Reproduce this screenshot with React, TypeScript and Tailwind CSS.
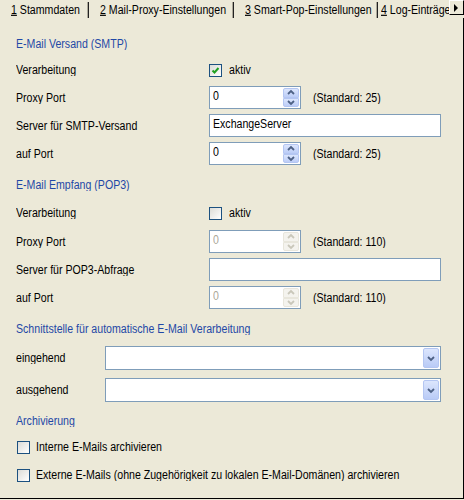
import React from "react";

const Txt = ({ children, className = "" }: { children: React.ReactNode; className?: string }) => (
  <span className={`inline-block scale-y-[1.18] whitespace-nowrap ${className}`}>{children}</span>
);

function Chevron({ dir, color }: { dir: "up" | "down"; color: string }) {
  const d = dir === "up" ? "M1 5 L4 2 L7 5" : "M1 2 L4 5 L7 2";
  return (
    <svg width="8" height="7" viewBox="0 0 8 7">
      <path d={d} fill="none" stroke={color} strokeWidth={1.8} />
    </svg>
  );
}

function Heading({ children, mt }: { children: React.ReactNode; mt: string }) {
  return (
    <div className={`h-[16px] flex items-center text-[#1f48a6] ${mt}`}>
      <Txt>{children}</Txt>
    </div>
  );
}

function Checkbox({ checked }: { checked?: boolean }) {
  return (
    <div className="w-[13px] h-[13px] border border-[#1c5180] bg-gradient-to-br from-[#dcdcd7] to-white flex items-center justify-center shrink-0">
      {checked && (
        <svg width="9" height="9" viewBox="0 0 9 9">
          <path d="M1.5 4.5 L3.5 6.5 L7.5 2" fill="none" stroke="#21a121" strokeWidth={2} />
        </svg>
      )}
    </div>
  );
}

function SpinBox({ value, disabled }: { value: string; disabled?: boolean }) {
  const arrow = disabled ? "#c9c7ba" : "#4d6185";
  const btn = disabled
    ? "bg-[#f4f3ee] border border-[#e8e6dc]"
    : "bg-gradient-to-b from-[#dce6fd] to-[#bccdf7] border border-[#b4c6f2]";
  return (
    <div className="w-[92px] h-[23px] border border-[#7f9db9] bg-white flex p-[1px]">
      <div className={`flex-1 pl-[2px] leading-[14px] ${disabled ? "text-[#aca899]" : "text-black"}`}>
        <Txt>{value}</Txt>
      </div>
      <div className="w-[16px] flex flex-col">
        <div className={`flex-1 flex items-center justify-center rounded-t-[2px] ${btn}`}>
          <Chevron dir="up" color={arrow} />
        </div>
        <div className={`flex-1 flex items-center justify-center rounded-b-[2px] ${btn}`}>
          <Chevron dir="down" color={arrow} />
        </div>
      </div>
    </div>
  );
}

function TextBox({ value }: { value?: string }) {
  return (
    <div className="w-[232px] h-[23px] border border-[#7f9db9] bg-white pl-[3px] leading-[16px]">
      <Txt>{value}</Txt>
    </div>
  );
}

function Combo() {
  return (
    <div className="w-[336px] h-[24px] border border-[#7f9db9] bg-white flex justify-end p-[1px]">
      <div className="w-[16px] rounded-[2px] bg-gradient-to-b from-[#dce6fd] to-[#b9cbf6] border border-[#b4c6f2] flex items-center justify-center">
        <Chevron dir="down" color="#4d6185" />
      </div>
    </div>
  );
}

function Row({ label, mt, h = "h-[23px]", children }: { label: string; mt: string; h?: string; children: React.ReactNode }) {
  return (
    <div className={`flex items-center ${h} ${mt}`}>
      <div className="w-[193px] shrink-0">
        <Txt>{label}</Txt>
      </div>
      {children}
    </div>
  );
}

function Tab({ num, label, w }: { num: string; label: string; w: string }) {
  return (
    <div className={`${w} shrink-0 h-full flex`}>
      <div className="flex-1 pl-[11px] pt-[2px] overflow-hidden">
        <Txt>
          <span className="underline underline-offset-1">{num}</span> {label}
        </Txt>
      </div>
      <div className="w-[1px] mt-[2px] bg-[#aca899]" />
      <div className="w-[1px] mt-[2px] bg-[#222]" />
    </div>
  );
}

export default function App() {
  return (
    <div className="w-[464px] h-[500px] bg-[#ece9d8] flex flex-col font-['Liberation_Sans',Arial,sans-serif] text-[10.6px] text-black overflow-hidden">
      <div className="h-[18px] flex shrink-0">
        <Tab num="1" label="Stammdaten" w="w-[89px]" />
        <Tab num="2" label="Mail-Proxy-Einstellungen" w="w-[145px]" />
        <Tab num="3" label="Smart-Pop-Einstellungen" w="w-[144px]" />
        <div className="flex-1 pl-[3px] pt-[2px] overflow-hidden">
          <Txt>
            <span className="underline underline-offset-1">4</span> Log-Einträge
          </Txt>
        </div>
        <div className="w-[15px] h-[15px] border-t border-l border-white border-r border-b border-r-black border-b-black bg-[#ece9d8] flex items-center justify-center">
          <svg width="5" height="8" viewBox="0 0 5 8">
            <path d="M0 0 L4 4 L0 8 Z" fill="#000" />
          </svg>
        </div>
      </div>

      <div className="flex-1 flex flex-col pl-[16px] border-r border-b border-black mb-[1px]">
        <Heading mt="mt-[18px]">E-Mail Versand (SMTP)</Heading>
        <Row label="Verarbeitung" mt="mt-[10px]" h="h-[16px]">
          <Checkbox checked />
          <Txt className="ml-[7px]">aktiv</Txt>
        </Row>
        <Row label="Proxy Port" mt="mt-[8px]">
          <SpinBox value="0" />
          <Txt className="ml-[12px]">(Standard: 25)</Txt>
        </Row>
        <Row label="Server für SMTP-Versand" mt="mt-[5px]">
          <TextBox value="ExchangeServer" />
        </Row>
        <Row label="auf Port" mt="mt-[5px]">
          <SpinBox value="0" />
          <Txt className="ml-[12px]">(Standard: 25)</Txt>
        </Row>

        <Heading mt="mt-[12px]">E-Mail Empfang (POP3)</Heading>
        <Row label="Verarbeitung" mt="mt-[12px]" h="h-[16px]">
          <Checkbox />
          <Txt className="ml-[7px]">aktiv</Txt>
        </Row>
        <Row label="Proxy Port" mt="mt-[9px]">
          <SpinBox value="0" disabled />
          <Txt className="ml-[12px]">(Standard: 110)</Txt>
        </Row>
        <Row label="Server für POP3-Abfrage" mt="mt-[5px]">
          <TextBox />
        </Row>
        <Row label="auf Port" mt="mt-[5px]">
          <SpinBox value="0" disabled />
          <Txt className="ml-[12px]">(Standard: 110)</Txt>
        </Row>

        <Heading mt="mt-[12px]">Schnittstelle für automatische E-Mail Verarbeitung</Heading>
        <div className="flex items-center h-[24px] mt-[9px]">
          <div className="w-[89px]">
            <Txt>eingehend</Txt>
          </div>
          <Combo />
        </div>
        <div className="flex items-center h-[24px] mt-[8px]">
          <div className="w-[89px]">
            <Txt>ausgehend</Txt>
          </div>
          <Combo />
        </div>

        <Heading mt="mt-[11px]">Archivierung</Heading>
        <div className="flex items-center h-[16px] mt-[10px] pl-[1px]">
          <Checkbox />
          <Txt className="ml-[6px]">Interne E-Mails archivieren</Txt>
        </div>
        <div className="flex items-center h-[16px] mt-[12px] pl-[1px]">
          <Checkbox />
          <Txt className="ml-[6px]">Externe E-Mails (ohne Zugehörigkeit zu lokalen E-Mail-Domänen) archivieren</Txt>
        </div>
      </div>
    </div>
  );
}
